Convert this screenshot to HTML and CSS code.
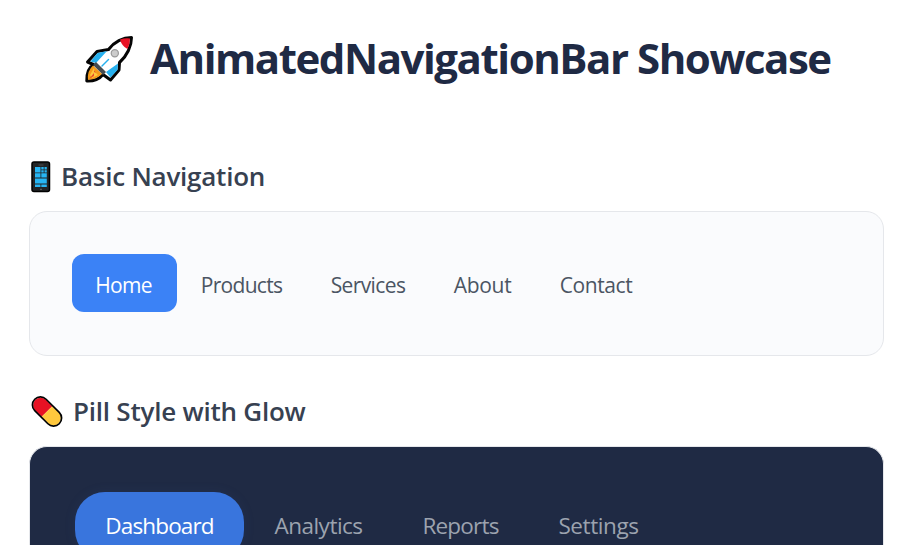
FILE: index.html
```html
<!DOCTYPE html>
<html lang="en">
<head>
<meta charset="utf-8">
<title>AnimatedNavigationBar Showcase</title>
<link rel="stylesheet" href="styles.css">
</head>
<body>
<main class="page">
  <h1 class="title">
    <svg class="rocket" viewBox="0 0 70 66" aria-hidden="true">
      <path d="M55.500 11.500 C47 11.500 38 16 32.500 23.500 L21 25.500 L11.500 36 L17.500 38.500 C12 42 10.500 48 10.800 55 C17 55.200 23 53.500 27 48.500 L34.500 54 L43 44 L43.500 36.500 C51 30 55.500 20 55.500 11.500Z" fill="#fff" stroke="#050505" stroke-width="3" stroke-linejoin="round"/>
      <path d="M21.500 27 L31 25 L20 37 L14.500 35.500Z M42 37.500 L41.500 44 L34.500 51.500 L30 46Z" fill="#26b0ee"/>
      <path d="M44 13.500 Q49 11.800 54 12.500 Q54 18 51.500 23 Q46 20.500 44 13.500Z" fill="#e81224"/>
      <path d="M20 36 L30 46 L27 49 L17 39Z" fill="#444b50"/>
      <path d="M17 39.500 L26 48 Q20 54 12 53.700 Q11 45 17 39.500Z" fill="#f59b19"/>
      <path d="M14 49 L18 42 L19 46 L22 49 L16 52Z" fill="#ffc83d"/>
      <path d="M13 53 L18 47 L18 50Z M18 44 L20 47 L18 46Z" fill="#e94e2b"/>
      <path d="M26 40 L32.500 33.500" stroke="#26b0ee" stroke-width="1.500" stroke-linecap="round"/>
      <circle cx="38.800" cy="27.300" r="3.600" fill="#ccc" stroke="#999" stroke-width="1.200"/>
    </svg>
    <span>AnimatedNavigationBar Showcase</span>
  </h1>

  <section class="demo">
    <h2 class="heading">
      <svg class="phone" viewBox="0 0 20 32" aria-hidden="true">
        <rect x="1" y="1" width="17.500" height="29.500" rx="2" fill="#222426" stroke="#000" stroke-width="1.500"/>
        <path d="M7.500 4h5" stroke="#555" stroke-width=".8"/>
        <path d="M4 6h5.500v5.500H4z M10.300 6h2.400v2.500h-2.400z M13.500 6h2.300v2.500h-2.300z M10.300 9.200h2.400v2.300h-2.400z M13.500 9.200h2.300v2.300h-2.300z M4 12.300h5.500v4.200H4z M10.300 12.300h5.500v4.200h-5.500z M4 17.500h11.800v5H4z M4 23.500h5.500v2.500H4z M10.300 23.500h5.500v2.500h-5.500z" fill="#27b6f4"/>
        <path d="M9 28.300h2" stroke="#777" stroke-width=".8"/>
      </svg>
      <span class="basic-label">Basic Navigation</span>
    </h2>
    <div class="card card-light">
      <nav class="nav nav-basic">
        <a class="item active home">Home</a>
        <a class="item products">Products</a>
        <a class="item services">Services</a>
        <a class="item about">About</a>
        <a class="item contact">Contact</a>
      </nav>
    </div>
  </section>

  <section class="demo">
    <h2 class="heading">
      <svg class="pill" viewBox="0 0 32 32" aria-hidden="true">
        <g transform="translate(16 15.500) rotate(45)">
          <path d="M0-7.500h-9a7.500 7.500 0 0 0 0 15h9z" fill="#e81224"/>
          <path d="M0-7.500h9a7.500 7.500 0 0 1 0 15h-9z" fill="#ffc83d"/>
          <rect x="-17.300" y="-8" width="34.600" height="16" rx="8" fill="none" stroke="#000" stroke-width="1.700"/>
        </g>
      </svg>
      <span class="pill-label">Pill Style with Glow</span>
    </h2>
    <div class="card card-dark">
      <nav class="nav nav-pill">
        <a class="item active dashboard">Dashboard</a>
        <a class="item analytics">Analytics</a>
        <a class="item reports">Reports</a>
        <a class="item settings">Settings</a>
      </nav>
    </div>
  </section>
</main>
</body>
</html>
```
FILE: styles.css
```css
* { box-sizing: border-box; }
html { overflow: hidden; }
body {
  margin: 0;
  height: 545px;
  overflow: hidden;
  background: #fff;
  font-family: "Open Sans", "Noto Sans", sans-serif;
}
.page { height: 545px; overflow: hidden; padding: 26px 24px 0 29px; }
.title {
  display: flex;
  align-items: center;
  height: 66px;
  margin: 0 0 60px;
  padding-left: 47px;
  color: #1f2a44;
  font-size: 42px;
  font-weight: 700;
  letter-spacing: -1.46px;
  white-space: nowrap;
}
.title span { padding-bottom: 4px; }
.rocket { width: 70px; height: 66px; margin-right: 4px; }
.demo { margin-bottom: 31px; }
.heading {
  display: flex;
  align-items: center;
  height: 50px;
  margin: 0 0 9px;
  color: #374151;
  font-size: 26px;
  font-weight: 600;
  letter-spacing: -0.23px;
  white-space: nowrap;
}
.heading span { padding-bottom: 2px; }
.phone { width: 20px; height: 32px; margin: 0 10px 0 2px; }
.pill { width: 32px; height: 32px; margin: 0 10px 0 2px; }
.card {
  height: 145px;
  border: 1px solid #e5e7eb;
  border-radius: 18px;
}
.card-light { padding: 42px; background: #fafbfd; }
.card-dark { height: 99px; padding: 45px 45px 0; border-bottom: 0; border-radius: 18px 18px 0 0; overflow: hidden; background: #1f2a44; }
.nav { display: flex; }
.item {
  display: flex;
  align-items: center;
  justify-content: center;
  white-space: nowrap;
}
.nav-basic .item { height: 58px; padding-top: 3px; color: #4b5563; font-size: 21px; border-radius: 12px; }
.nav-basic .active { background: #3b82f6; color: #fff; }
.nav-pill .item { height: 68px; padding-bottom: 2px; color: #9ca3af; font-size: 22.500px; border-radius: 30px; }
.nav-pill .active { background: #3975dd; color: #fff; box-shadow: 0 0 12px rgba(59, 90, 160, .12); }
.nav .home { width: 105px; padding-right: 2px; letter-spacing: -0.7px; }
.products { width: 129px; letter-spacing: -0.7px; }
.services { width: 124px; letter-spacing: -0.6px; }
.about { width: 105px; letter-spacing: -0.3px; }
.contact { width: 122px; letter-spacing: -0.4px; }
.dashboard { width: 169px; letter-spacing: -0.85px; }
.analytics { width: 149px; letter-spacing: -0.5px; }
.reports { width: 135px; letter-spacing: -0.8px; }
.settings { width: 141px; letter-spacing: -0.4px; }
```
